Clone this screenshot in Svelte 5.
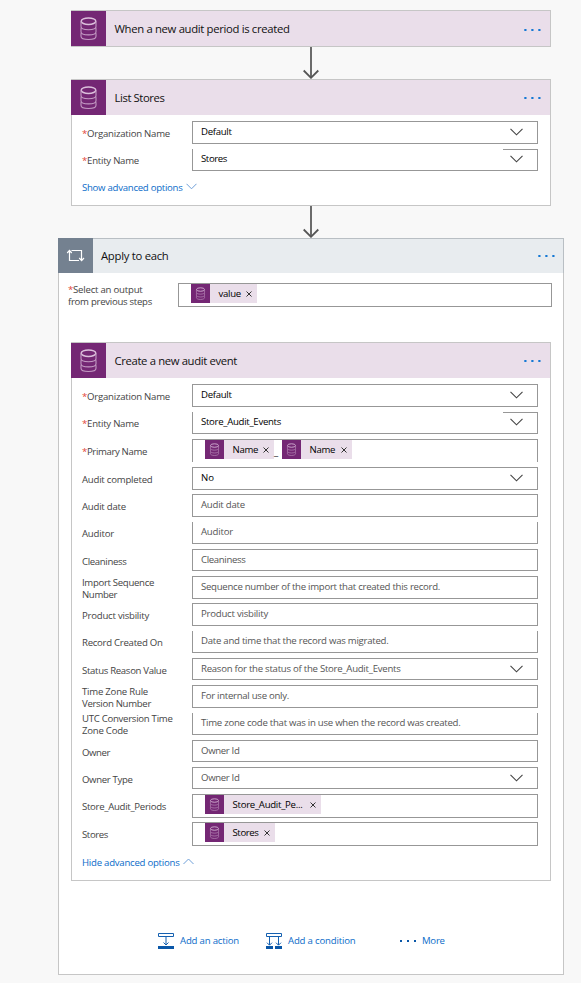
<script>
  const storeFields = [
    { label: [['*Organization Name', 88]], text: 'Default', w: 30.5, select: true, gap: 6, h: 23 },
    { label: [['*Entity Name', 57]], text: 'Stores', w: 26, select: true, gap: 5, h: 22, open: 'top' }
  ];

  const eventFields = [
    { label: [['*Organization Name', 88]], text: 'Default', w: 30.5, select: true, gap: 6, h: 23 },
    { label: [['*Entity Name', 57]], text: 'Store_Audit_Events', w: 80, select: true, gap: 5, h: 22, open: 'top' },
    { label: [['*Primary Name', 65]], tokens: [['Name', 25.5, 69], ['Name', 25.5, 70]], gap: 5, h: 23, open: 'bottom' },
    { label: [['Audit completed', 70.5]], text: 'No', w: 13, select: true, gap: 5, h: 23 },
    { label: [['Audit date', 44]], text: 'Audit date', w: 44, hint: true, gap: 4, h: 23 },
    { label: [['Auditor', 32]], text: 'Auditor', w: 32, hint: true, gap: 5, h: 22, open: 'top' },
    { label: [['Cleaniness', 44.5]], text: 'Cleaniness', w: 44.5, hint: true, gap: 5, h: 22 },
    { label: [['Import Sequence', 72], ['Number', 35]], text: 'Sequence number of the import that created this record.', w: 239, hint: true, gap: 5, h: 23 },
    { label: [['Product visbility', 67]], text: 'Product visbility', w: 67, hint: true, gap: 4, h: 23 },
    { label: [['Record Created On', 80.5]], text: 'Date and time that the record was migrated.', w: 187.5, hint: true, gap: 5, h: 22, open: 'top' },
    { label: [['Status Reason Value', 84.5]], text: 'Reason for the status of the Store_Audit_Events', w: 199.5, hint: true, select: true, gap: 5, h: 22 },
    { label: [['Time Zone Rule', 66], ['Version Number', 69]], text: 'For internal use only.', w: 88, hint: true, gap: 5, h: 23 },
    { label: [['UTC Conversion Time', 90.5], ['Zone Code', 46]], text: 'Time zone code that was in use when the record was created.', w: 259.5, hint: true, gap: 5, h: 22, open: 'top' },
    { label: [['Owner', 28]], text: 'Owner Id', w: 38.5, hint: true, gap: 5, h: 22 },
    { label: [['Owner Type', 50.5]], text: 'Owner Id', w: 38.5, hint: true, select: true, gap: 5, h: 22 },
    { label: [['Store_Audit_Periods', 84]], tokens: [['Store_Audit_Pe...', 70, 116]], gap: 5, h: 24 },
    { label: [['Stores', 26]], tokens: [['Stores', 26, 70]], gap: 4, h: 24 }
  ];

  // Tracks a line of text so that it spans the given width.
  function fit(node, width) {
    const natural = node.getBoundingClientRect().width;
    const n = node.textContent.length;
    node.style.letterSpacing = `${(width - natural) / n}px`;
  }
</script>

{#snippet line(text, w)}
  <span class="line" use:fit={w}>{#if text[0] === '*'}<i class="req">*</i>{text.slice(1)}{:else}{text}{/if}</span>
{/snippet}

{#snippet database(size)}
  <svg width={size} height={size} viewBox="0 0 35 35" fill="none" stroke="#c39ac3" stroke-width="1.1">
    <ellipse cx="17.5" cy="10.2" rx="7.3" ry="3.2" stroke="#dcc0dc" stroke-width="1.5" />
    <path d="M10 10.5v5c0 1.8 3 3.2 7.5 3.2s7.5-1.4 7.5-3.2v-5" />
    <path d="M10.4 16.6c-.3.4-.4.8-.4 1.3v2.8c0 1.8 3 3.2 7.5 3.2s7.5-1.4 7.5-3.2v-2.8c0-.5-.1-.9-.4-1.3" />
    <path d="M10.4 21.9c-.3.4-.4.8-.4 1.3v2c0 1.8 3 3.3 7.5 3.3s7.5-1.5 7.5-3.3v-2c0-.5-.1-.9-.4-1.3" />
  </svg>
{/snippet}

{#snippet dots()}
  <svg class="dots" width="17" height="2" viewBox="0 0 17 2" fill="#1478d4">
    <rect x="0.3" width="2.2" height="2" /><rect x="7.3" width="2.2" height="2" /><rect x="14.3" width="2.2" height="2" />
  </svg>
{/snippet}

{#snippet arrow()}
  <svg class="arrow" width="18" height="32" viewBox="0 0 18 32" fill="none" stroke="#555" stroke-width="2">
    <path d="M9 0v31" stroke="#6b6b6b" /><path d="M1.7 23.5 9 30.8l7.3-7.3" stroke-width="1.8" />
  </svg>
{/snippet}

{#snippet token(text, w, total)}
  <span class="token" style:width="{total}px">
    <span class="tile">{@render database(19)}</span>
    <span class="name">{@render line(text, w)}</span>
    <svg class="x" width="6" height="6" viewBox="0 0 6 6" stroke="#333" stroke-width="1"><path d="M.5.5l5 5M5.5.5l-5 5" /></svg>
  </span>
{/snippet}

{#snippet fields(list)}
  {#each list as f}
    <div class="row" style:margin-top="{f.gap}px" style:height="{f.h}px">
      <div class="label" class:short={f.open === 'top'}>
        {#each f.label as [t, w]}<div>{@render line(t, w)}</div>{/each}
      </div>
      <div class="box {f.open ? 'open-' + f.open : ''}" class:select={f.select}>
        {#if f.tokens}
          <div class="tokens">
            {#each f.tokens as [t, w, total], i}
              {#if i}<span class="joiner">_</span>{/if}{@render token(t, w, total)}
            {/each}
          </div>
        {:else}
          <span class="value" class:hint={f.hint}>{@render line(f.text, f.w)}</span>
        {/if}
        {#if f.select}
          <span class="drop">
            <svg width="13" height="8" viewBox="0 0 13 8" fill="none" stroke="#444" stroke-width="1.1"><path d="M.5.8l6 6 6-6" /></svg>
          </span>
        {/if}
      </div>
    </div>
  {/each}
{/snippet}

{#snippet head(title, w)}
  <header>
    <span class="icon">{@render database(35)}</span>
    <h2>{@render line(title, w)}</h2>
    {@render dots()}
  </header>
{/snippet}

<main>
  <section class="card first">{@render head('When a new audit period is created', 175)}</section>
  {@render arrow()}
  <section class="card stores">
    {@render head('List Stores', 50)}
    {@render fields(storeFields)}
    <a class="toggle" href="#more">{@render line('Show advanced options', 100.5)}
      <svg width="11" height="7" viewBox="0 0 11 7" fill="none" stroke="#6f9fd8"><path d="M.5.8l5 5 5-5" /></svg></a>
  </section>
  {@render arrow()}
  <section class="loop">
    <header>
      <span class="icon">
        <svg width="35" height="35" viewBox="0 0 35 35" fill="none" stroke="#fff" stroke-width="1.2">
          <path d="M13.5 12.5H23.5V22M9.2 15l2.3-2.6 2.3 2.6M11.5 13v9.5H21M21.2 20l2.4 2.6 2.4-2.6" />
        </svg>
      </span>
      <h2>{@render line('Apply to each', 67.5)}</h2>
      {@render dots()}
    </header>
    <div class="source">
      <div class="label">
        <div>{@render line('*Select an output', 74.5)}</div>
        <div>{@render line('from previous steps', 84)}</div>
      </div>
      <div class="box"><div class="tokens">{@render token('value', 22.5, 66)}</div></div>
    </div>
    <section class="card event">
      {@render head('Create a new audit event', 122.5)}
      {@render fields(eventFields)}
      <a class="toggle" href="#less">{@render line('Hide advanced options', 97.5)}
        <svg width="11" height="7" viewBox="0 0 11 7" fill="none" stroke="#6f9fd8"><path d="M.5 6l5-5 5 5" /></svg></a>
    </section>
    <footer>
      <a class="act one" href="#action">
        <svg width="16" height="16" viewBox="0 0 16 16" fill="none" stroke="#1560b0">
          <path d="M.5.5h15v3H.5zM8 4v8M5.5 9.5 8 12l2.5-2.5" /><path d="M0 13h16v3H0z" fill="#0a57a8" stroke="none" />
        </svg>
        {@render line('Add an action', 59)}
      </a>
      <a class="act two" href="#condition">
        <svg width="16" height="16" viewBox="0 0 16 16" fill="none" stroke="#1560b0">
          <path d="M.5.5h15v3H.5zM3.5 4v8M1 9.7l2.5 2.5L6 9.7M12.5 4v8M10 9.7l2.5 2.5L15 9.7" /><path d="M0 13h7v3H0zM9 13h7v3H9z" fill="#0a57a8" stroke="none" />
        </svg>
        {@render line('Add a condition', 67.5)}
      </a>
      <a class="act three" href="#menu">
        <svg width="16" height="2" viewBox="0 0 16 2" fill="#0a57a8"><path d="M0 0h2v2H0zM7 0h2v2H7zM14 0h2v2h-2z" /></svg>
        {@render line('More', 22.7)}
      </a>
    </footer>
  </section>
</main>

<style>
  :global(body) { background: #f8f8f8; }
  main {
    box-sizing: border-box; width: 581px; height: 983px; padding-top: 10px; overflow: hidden;
    font: 9.6px/12px "Open Sans", "Noto Sans", sans-serif; color: #444;
  }
  svg { display: block; flex: none; }
  .line { display: inline-block; white-space: nowrap; }
  .req { font-style: normal; color: #e2453a; }
  .card { box-sizing: border-box; width: 480px; margin-left: 71px; border: 1px solid #c6c6c6; background: #fff; }
  .first { height: 37px; }
  .stores { height: 127px; }
  .event { height: 539px; margin: 35px 0 0 12px; }
  header { display: flex; align-items: center; height: 35px; margin-left: -1px; background: #eadeea; }
  .icon { width: 35px; height: 35px; background: #742774; flex: none; }
  h2 { margin: 0 auto 0 8.5px; font: 11.3px/16px "Open Sans", "Noto Sans", sans-serif; color: #111; }
  .dots { margin: 1px 9px 0 0; }
  .first .dots { margin-top: 3px; }
  .arrow { margin-left: 302px; }
  .row { display: flex; padding-left: 10px; }
  .label { width: 110px; flex: none; display: flex; flex-direction: column; justify-content: center; height: 25px; }
  .label.short { height: 23px; }
  .box { box-sizing: border-box; width: 346px; height: 100%; border: 1px solid #979797; display: flex; background: #fff; }
  .open-top { border-top-color: transparent; border-top-width: 0; padding-top: 1px; }
  .open-bottom { border-bottom: 0; }
  .value { padding: 4px 0 0 8px; color: #000; height: 12px; }
  .hint { color: #555; }
  .open-top .value { padding-top: 3px; }
  .drop { display: flex; justify-content: center; box-sizing: border-box; width: 34px; margin-left: auto; padding: 6px 7px 0 0; }
  .open-top .drop { border-top: 1px solid #979797; margin-top: -1px; padding-top: 5px; }
  .tokens { display: flex; padding-left: 12px; color: #000; }
  .token { display: flex; align-items: center; box-sizing: border-box; height: 19px; padding-right: 5px; background: #eadeea; }
  .x { margin-top: 1px; }
  .tile { width: 19px; height: 19px; background: #742774; }
  .name { margin: 0 auto 0 8.5px; }
  .joiner { width: 8px; padding-top: 6px; }
  .toggle { display: flex; gap: 3.5px; padding: 11px 0 0 10px; color: #0b6cc9; text-decoration: none; }
  .toggle svg { margin-top: 1px; }
  .loop { box-sizing: border-box; width: 506px; height: 737px; margin-left: 58px; border: 1px solid #c6c6c6; background: #fff; }
  .loop > header { background: #e8ecef; height: 35px; margin: -1px -1px 0; border: 1px solid #b9bfc4; border-width: 1px 1px 0 0; box-sizing: border-box; }
  .loop > header .icon { background: #748190; margin-top: -1px; }
  .loop > header .dots { margin: -1px 8px 0 0; }
  .loop > header h2 { margin-left: 8px; }
  .source { display: flex; height: 24px; padding: 10px 0 0 9px; }
  .source .box { width: 374px; }
  footer { display: flex; height: 16px; margin-top: 52px; padding-left: 99px; }
  .act { display: flex; align-items: center; gap: 6px; color: #0b6cc9; text-decoration: none; }
  .one { width: 108px; }
  .two { width: 134px; }
</style>
